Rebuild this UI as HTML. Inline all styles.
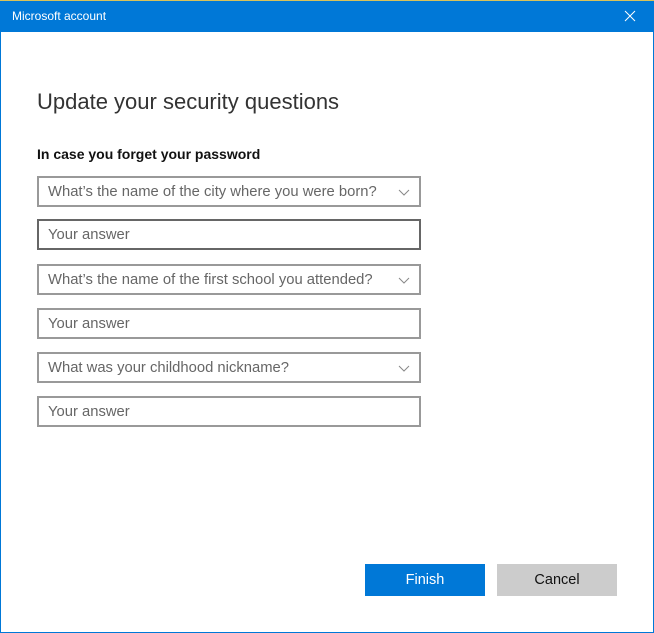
<!DOCTYPE html>
<html><head><style>
*{margin:0;padding:0;box-sizing:border-box}
html,body{width:654px;height:633px;overflow:hidden;background:#fff;font-family:"Liberation Sans",sans-serif}
.win{position:absolute;left:0;top:0;width:654px;height:633px;border:1px solid #0078d7;border-top:none}
.tb{position:absolute;left:0;top:0;width:654px;height:32px;background:#0078d7;border-top:1px solid #d8c25a}
.tb span{position:absolute;left:12px;top:8px;color:#fff;font-size:12px}
.x{position:absolute;left:624px;top:9px}
h1{position:absolute;left:37px;top:89px;font-weight:normal;font-size:22px;color:#333}
.lb{position:absolute;left:37px;top:146px;font-size:14px;font-weight:bold;color:#111}
.box{position:absolute;left:37px;width:384px;height:31px;border:2px solid #999;font-size:14.8px;color:#666;padding:6px 0 0 9px}
.box.d{border-color:#666}
.box svg{position:absolute;right:9px;top:11px}
.btn{position:absolute;top:564px;width:120px;height:32px;font-size:14.5px;text-align:center;line-height:32px}
</style></head><body>
<div class="win"></div>
<div class="tb"><span>Microsoft account</span>
<svg class="x" width="12" height="12"><path d="M1 1L11 11M11 1L1 11" stroke="#fff" stroke-width="1"/></svg></div>
<h1>Update your security questions</h1>
<div class="lb">In case you forget your password</div>
<div class="box" style="top:176px">What’s the name of the city where you were born?<svg width="12" height="7"><path d="M1 1L6 6L11 1" stroke="#888" fill="none"/></svg></div>
<div class="box d" style="top:219px;color:#666">Your answer</div>
<div class="box" style="top:264px">What’s the name of the first school you attended?<svg width="12" height="7"><path d="M1 1L6 6L11 1" stroke="#888" fill="none"/></svg></div>
<div class="box" style="top:308px;color:#666">Your answer</div>
<div class="box" style="top:352px">What was your childhood nickname?<svg width="12" height="7"><path d="M1 1L6 6L11 1" stroke="#888" fill="none"/></svg></div>
<div class="box" style="top:396px;color:#666">Your answer</div>
<div class="btn" style="left:365px;background:#0078d7;color:#fff">Finish</div>
<div class="btn" style="left:497px;background:#ccc;color:#111">Cancel</div>
</body></html>
